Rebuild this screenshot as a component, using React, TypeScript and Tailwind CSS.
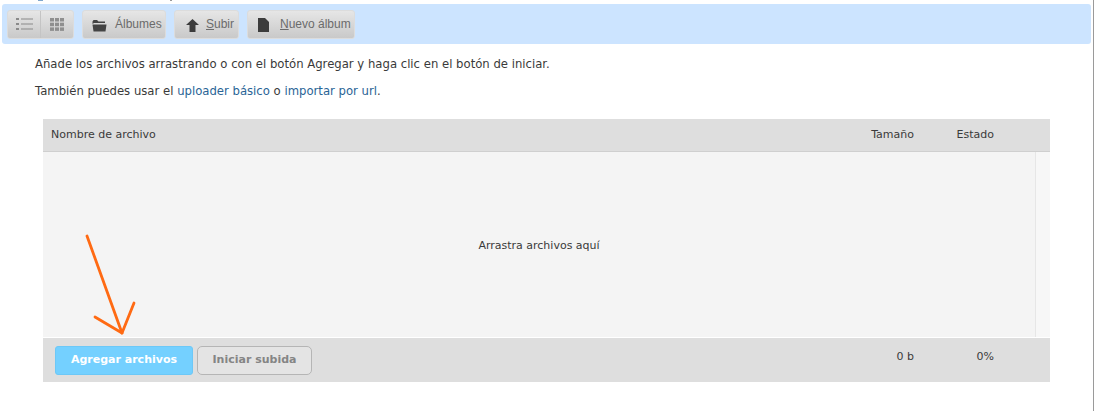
import type { ReactNode } from "react";

const btn =
  "h-[29px] flex items-center rounded-[3px] border border-[#dcdcdc] bg-gradient-to-b from-[#e6e6e6] to-[#c9c9c9]";

function ToolButton({ icon, children, className }: { icon: ReactNode; children: ReactNode; className: string }) {
  return (
    <div className={`${btn} ${className}`}>
      {icon}
      <span className="font-['Liberation_Sans',sans-serif] text-[12px] text-[#6b6b6b]">{children}</span>
    </div>
  );
}

export default function App() {
  return (
    <div className="relative h-[411px] w-[1094px] overflow-hidden border-r border-[#9a9a9a] bg-white font-['DejaVu_Sans',sans-serif] text-[11px] text-[#3a3a3a]">
      {/* restos del texto recortado arriba */}
      <span className="absolute left-[38px] top-0 h-px w-[5px] bg-[#7fa6cc]" />
      <span className="absolute left-[170px] top-0 h-px w-[2px] bg-[#999]" />
      <div className="pt-1 pl-0.5 pr-0.5">
        <div className="flex h-10 items-center gap-2 rounded-[3px] bg-[#cce4ff] pl-[5px]">
          <div className={`${btn} w-[67px]`}>
            <div className="flex h-full w-[33px] items-center justify-center border-r border-[#c4c4c4]">
              <svg width="17" height="12" viewBox="0 0 17 12" fill="#8a8a8a">
                <rect x="0" y="0" width="3" height="2" />
                <rect x="0" y="5" width="3" height="2" />
                <rect x="0" y="10" width="3" height="2" />
                <rect x="5" y="0.5" width="12" height="1" />
                <rect x="5" y="5.5" width="12" height="1" />
                <rect x="5" y="10.5" width="12" height="1" />
              </svg>
            </div>
            <div className="flex flex-1 items-center justify-center">
              <svg width="14" height="13" viewBox="0 0 14 13" fill="#8f8f8f">
                <rect x="0" y="0" width="4" height="3.5" />
                <rect x="5" y="0" width="4" height="3.5" />
                <rect x="10" y="0" width="4" height="3.5" />
                <rect x="0" y="4.7" width="4" height="3.5" />
                <rect x="5" y="4.7" width="4" height="3.5" />
                <rect x="10" y="4.7" width="4" height="3.5" />
                <rect x="0" y="9.4" width="4" height="3.5" />
                <rect x="5" y="9.4" width="4" height="3.5" />
                <rect x="10" y="9.4" width="4" height="3.5" />
              </svg>
            </div>
          </div>
          <ToolButton
            className="w-[84px] pl-[9px]"
            icon={
              <svg className="mr-2 mt-0.5" width="15" height="13" viewBox="0 0 15 13" fill="#444">
                <path d="M0.5 2.5 L1.5 1 H5 L6.5 2.5 H13 V4 H2 L0.5 5 Z" />
                <path d="M0.5 5.5 H14.5 L13.5 12.5 H1.5 Z" />
              </svg>
            }
          >
            Álbumes
          </ToolButton>
          <ToolButton
            className="w-[65px] pl-[11px]"
            icon={
              <svg className="mr-[7px] mt-0.5" width="13" height="13" viewBox="0 0 13 13" fill="#3c3c3c">
                <path d="M6.5 0 L13 6 H9.5 V13 H3.5 V6 H0 Z" />
              </svg>
            }
          >
            <u>S</u>ubir
          </ToolButton>
          <ToolButton
            className="w-[108px] pl-[10px]"
            icon={
              <svg className="mr-[11px] mt-0.5" width="11" height="14" viewBox="0 0 11 14" fill="#3c3c3c">
                <path d="M0 0 H7 L11 4 V14 H0 Z" />
              </svg>
            }
          >
            <u>N</u>uevo álbum
          </ToolButton>
        </div>
      </div>

      <p className="mt-[13px] ml-[35px] h-[14px] text-[11.66px] leading-[14px]">
        Añade los archivos arrastrando o con el botón Agregar y haga clic en el botón de iniciar.
      </p>
      <p className="mt-[13px] ml-[35px] h-[14px] text-[11.66px] leading-[14px]">
        También puedes usar el <span className="text-[#2a6496]">uploader básico</span> o{" "}
        <span className="text-[#2a6496]">importar por url</span>.
      </p>

      <div className="mt-[21px] ml-[43px] w-[1007px]">
        <div className="flex h-[33px] items-center border-b border-[#cfcfcf] bg-[#dedede] pl-2 pr-[56px]">
          <span className="flex-1">Nombre de archivo</span>
          <span className="w-[80px] text-right">Tamaño</span>
          <span className="w-[80px] text-right">Estado</span>
        </div>
        <div className="flex h-[185px] bg-[#f4f4f4]">
          <div className="flex flex-1 items-center justify-center border-r border-[#e6e6e6]">
            <span className="relative top-[2px]">Arrastra archivos aquí</span>
          </div>
          <div className="w-[14px] bg-[#f7f7f7]" />
        </div>
        <div className="mt-px flex h-[44px] items-start bg-[#dedede] pl-3 pr-[56px] pt-2">
          <div className="flex h-[29px] w-[138px] items-center justify-center rounded-[3px] border border-[#6cc8f7] bg-[#74d0ff] text-[11px] font-bold text-white">
            Agregar archivos
          </div>
          <div className="ml-1 flex h-[29px] w-[115px] items-center justify-center rounded-[5px] border border-[#b5b5b5] bg-[#e4e4e4] text-[11px] font-bold text-[#858585]">
            Iniciar subida
          </div>
          <div className="flex-1" />
          <span className="w-[80px] pt-[3px] text-right">0 b</span>
          <span className="w-[80px] pt-[3px] text-right">0%</span>
        </div>
      </div>

      {/* flecha naranja encima del botón */}
      <svg className="absolute left-0 top-0" width="200" height="411" fill="none" stroke="#ff6a13" strokeWidth="2.8" strokeLinecap="round" strokeLinejoin="round">
        <path d="M87 236 L122 333" />
        <path d="M95 317 L122 333 L134 303" />
      </svg>
    </div>
  );
}
